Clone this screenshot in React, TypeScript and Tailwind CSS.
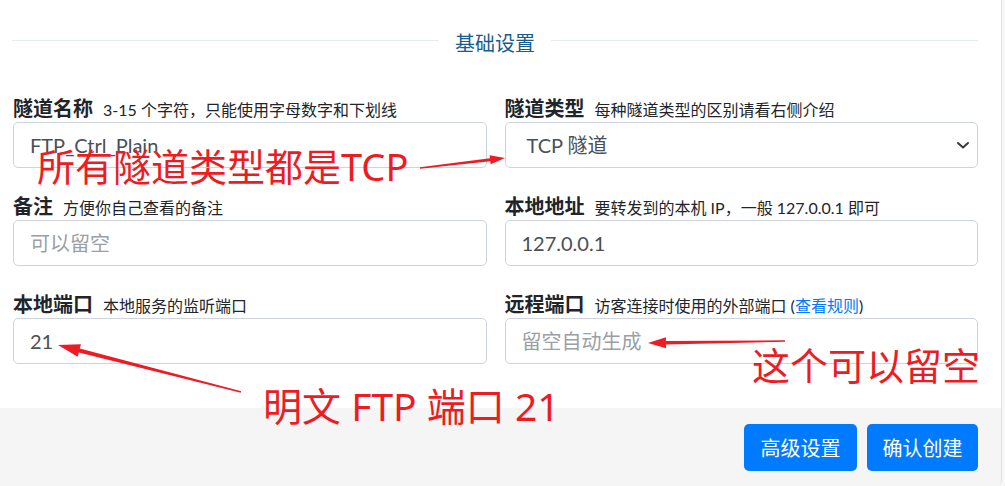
const cjk = { fontFamily: 'Lato, "Noto Sans CJK SC", sans-serif' };
const mark = { fontFamily: '"Noto Sans", "Noto Sans CJK SC", sans-serif' };

function arrowPoints(x1: number, y1: number, x2: number, y2: number, head: number, hw: number, w0: number, w1: number) {
  const dx = x2 - x1;
  const dy = y2 - y1;
  const len = Math.hypot(dx, dy);
  const ux = dx / len;
  const uy = dy / len;
  const nx = -uy;
  const ny = ux;
  const bx = x2 - ux * head;
  const by = y2 - uy * head;
  const pts = [
    [x1 + nx * w0, y1 + ny * w0],
    [bx + nx * w1, by + ny * w1],
    [bx + nx * hw, by + ny * hw],
    [x2, y2],
    [bx - nx * hw, by - ny * hw],
    [bx - nx * w1, by - ny * w1],
    [x1 - nx * w0, y1 - ny * w0],
  ];
  return pts.map((p) => p.join(',')).join(' ');
}

function Field({ label, hint, children }: { label: string; hint: React.ReactNode; children: React.ReactNode }) {
  return (
    <div className="flex flex-col">
      <div className="flex items-baseline gap-[10px] h-[28px] leading-[28px] whitespace-nowrap">
        <span className="text-[20px] font-bold text-[#212529]">{label}</span>
        <span className="text-[16px] text-[#212529]">{hint}</span>
      </div>
      {children}
    </div>
  );
}

function TextInput({ value, placeholder }: { value?: string; placeholder?: string }) {
  return (
    <div className="h-[46px] rounded-[5px] border border-[#ced4da] bg-white flex items-center px-[16px] text-[20px]">
      {value ? (
        <span className="text-[#495057]">{value}</span>
      ) : (
        <span className="text-[#9aa0a6]">{placeholder}</span>
      )}
    </div>
  );
}

export default function App() {
  return (
    <div className="relative w-[1005px] h-[486px] overflow-hidden bg-[#f7f7f7]" style={cjk}>
      <div className="w-[1002px] h-[486px] flex flex-col bg-white border-r border-[#dcdfe3] rounded-br-[6px] overflow-hidden">
        {/* Form */}
        <div className="flex-1 pl-[13px] pr-[23px] pt-[29px]">
          <div className="flex items-center h-[28px] mb-[37px]">
            <div className="flex-1 h-px bg-[#e4ecec] ml-[-1px] mb-[6px]" />
            <span className="mx-[16px] text-[20px] text-[#165c8f]">基础设置</span>
            <div className="flex-1 h-px bg-[#e4ecec] mb-[6px]" />
          </div>

          <div className="grid grid-cols-2 gap-x-[18px] gap-y-[24px]">
            <Field label="隧道名称" hint="3-15 个字符，只能使用字母数字和下划线">
              <TextInput value="FTP_Ctrl_Plain" />
            </Field>
            <Field label="隧道类型" hint="每种隧道类型的区别请看右侧介绍">
              <div className="h-[46px] rounded-[5px] border border-[#ced4da] bg-white flex items-center justify-between pl-[21px] pr-[7px] text-[20px] text-[#495057]">
                <span>TCP 隧道</span>
                <svg width="14" height="10" viewBox="0 0 14 10">
                  <polyline points="2,3 7,7.5 12,3" fill="none" stroke="#343a40" strokeWidth="2" strokeLinecap="round" strokeLinejoin="round" />
                </svg>
              </div>
            </Field>
            <Field label="备注" hint="方便你自己查看的备注">
              <TextInput placeholder="可以留空" />
            </Field>
            <Field label="本地地址" hint="要转发到的本机 IP，一般 127.0.0.1 即可">
              <TextInput value="127.0.0.1" />
            </Field>
            <Field label="本地端口" hint="本地服务的监听端口">
              <TextInput value="21" />
            </Field>
            <Field
              label="远程端口"
              hint={
                <>
                  访客连接时使用的外部端口 (<span className="text-[#007bff]">查看规则</span>)
                </>
              }
            >
              <TextInput placeholder="留空自动生成" />
            </Field>
          </div>
        </div>

        {/* Footer */}
        <div className="h-[78px] bg-[#f5f5f5] flex justify-end items-start gap-[10px] pt-[16px] pr-[23px]">
          <button className="h-[47px] w-[113px] rounded-[5px] bg-[#007bff] text-white text-[20px]">高级设置</button>
          <button className="h-[47px] w-[111px] rounded-[5px] bg-[#007bff] text-white text-[20px]">确认创建</button>
        </div>
      </div>

      {/* Red annotations */}
      <div className="absolute left-[37px] top-[147px] text-[38px] leading-none text-[#ed1c24] whitespace-nowrap" style={mark}>
        所有隧道类型都是TCP
      </div>
      <div className="absolute left-[263px] top-[386px] text-[39px] leading-none text-[#ed1c24] whitespace-nowrap" style={mark}>
        明文 FTP 端口 21
      </div>
      <div className="absolute left-[752px] top-[346px] text-[38px] leading-none text-[#ed1c24] whitespace-nowrap" style={mark}>
        这个可以留空
      </div>
      <svg className="absolute inset-0 pointer-events-none" width="1005" height="486">
        <polygon points={arrowPoints(420, 168, 505, 158, 15, 4.5, 0.7, 1.6)} fill="#ed1c24" />
        <polygon points={arrowPoints(241, 392, 58, 345, 22, 6.5, 0.7, 2)} fill="#ed1c24" />
        <polygon points={arrowPoints(785, 341, 648, 343, 18, 5.5, 0.7, 1.8)} fill="#ed1c24" />
      </svg>
    </div>
  );
}
